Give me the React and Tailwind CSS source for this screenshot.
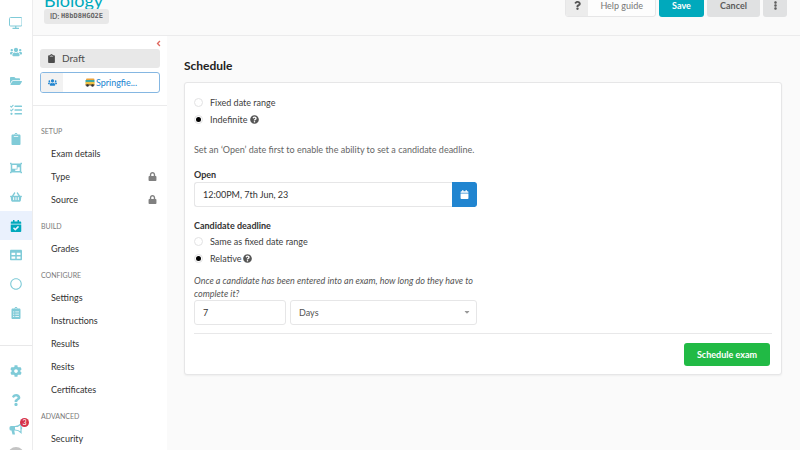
import {
  FaUsers, FaFolderOpen, FaTasks, FaClipboard, FaObjectGroup, FaShoppingBasket,
  FaCalendarCheck, FaTable, FaRegCircle, FaClipboardList, FaCog, FaQuestion,
  FaLock, FaQuestionCircle, FaCalendar, FaEllipsisV, FaAngleLeft, FaCaretDown,
} from "react-icons/fa";

function ScreenIcon({ className }) {
  return (
    <svg viewBox="0 0 27 24" className={className} fill="none" stroke="currentColor" strokeWidth="2">
      <rect x="1" y="1" width="25" height="17" rx="2" />
      <path d="M13.5 18v4M7 22.5h13" strokeWidth="2.5" />
    </svg>
  );
}

function HornIcon({ className }) {
  return (
    <svg viewBox="0 0 28 24" className={className} fill="none" stroke="currentColor" strokeWidth="2.4">
      <path d="M12 7c5 0 9-2 12-5v17c-3-3-7-5-12-5" />
      <path d="M12 6H4a3 3 0 0 0-3 3v3a3 3 0 0 0 3 3h1l2 8h5l-1.5-8H12z" fill="currentColor" stroke="none" />
      <path d="M25 8.5v4" />
    </svg>
  );
}

const railItems = [
  { label: "Dashboard", icon: ScreenIcon },
  { label: "Users", icon: FaUsers },
  { label: "Library", icon: FaFolderOpen },
  { label: "Items", icon: FaTasks },
  { label: "Tests", icon: FaClipboard },
  { label: "Groups", icon: FaObjectGroup },
  { label: "Products", icon: FaShoppingBasket },
  { label: "Exams", icon: FaCalendarCheck, active: true },
  { label: "Tables", icon: FaTable },
  { label: "Status", icon: FaRegCircle },
  { label: "Reports", icon: FaClipboardList },
];

const menu = [
  { title: "Setup", items: [{ name: "Exam details" }, { name: "Type", locked: true }, { name: "Source", locked: true }] },
  { title: "Build", items: [{ name: "Grades" }] },
  {
    title: "Configure",
    items: [{ name: "Settings" }, { name: "Instructions" }, { name: "Results" }, { name: "Resits" }, { name: "Certificates" }],
  },
  { title: "Advanced", items: [{ name: "Security" }] },
];

function RailLink({ label, icon: Icon, active, badge }) {
  return (
    <a
      href="#"
      aria-label={label}
      className={
        active
          ? "relative flex h-[29px] shrink-0 items-center justify-center pr-px bg-[#eaf1fd] text-[#00a9bc]"
          : "relative flex h-[29px] shrink-0 items-center justify-center pr-px text-[#80cbd8]"
      }
    >
      <Icon className="h-3 w-auto" />
      {badge && (
        <span className="absolute top-1 right-[3px] flex size-[9px] items-center justify-center rounded-full bg-[#d6324a] text-[7px] leading-none text-white">
          {badge}
        </span>
      )}
    </a>
  );
}

function Rail() {
  return (
    <nav className="flex w-[33px] shrink-0 flex-col overflow-hidden border-r border-[#ececed] bg-white pt-2">
      {railItems.map((item) => (
        <RailLink key={item.label} {...item} />
      ))}
      <div className="mt-[18px] flex flex-col border-t border-[#e8e8e9] pt-2.5">
        <RailLink label="Preferences" icon={FaCog} />
        <RailLink label="Help" icon={FaQuestion} />
        <RailLink label="News" icon={HornIcon} badge="3" />
        <span className="mt-1 ml-2 size-4 shrink-0 rounded-full bg-[#c4c4c4]" />
      </div>
    </nav>
  );
}

function BusIcon() {
  return (
    <svg viewBox="0 0 20 18" className="h-[9px] w-2.5 shrink-0">
      <rect x="2" y="1" width="17" height="4" rx="2" fill="#e9a23b" />
      <rect x="1" y="4" width="18" height="5" fill="#3fa7a0" />
      <rect x="1" y="8" width="18" height="6" rx="1" fill="#f0c043" />
      <rect x="1" y="13" width="18" height="2" fill="#5b4636" />
      <circle cx="5" cy="15" r="2.5" fill="#333" />
      <circle cx="15" cy="15" r="2.5" fill="#333" />
    </svg>
  );
}

function Header() {
  return (
    <header className="flex h-9 shrink-0 items-end justify-between border-b border-[#ebebec] pr-[13px] pl-[11px]">
      <div className="flex flex-col items-start pb-[11px]">
        <h1 className="text-[18px] leading-[18px] text-[#00a9bc]">Biology</h1>
        <span className="flex h-[15px] items-center rounded-[3px] bg-[#e8e8e8] px-1.5 text-[7px] font-bold text-[#666]">
          ID:&nbsp;<code className="font-['DejaVu_Sans_Mono',monospace] text-[7px]">H8bD8HGO2E</code>
        </span>
      </div>
      <div className="flex gap-[3px] pb-[18px] text-[9px]">
        <button className="flex h-[23px] items-center overflow-hidden rounded-[3px] border border-[#e6e6e7] bg-[#fdfdfd] text-[#767676]">
          <span className="flex h-full w-[22px] items-center justify-center bg-[#ececec] text-[#555]">
            <FaQuestion className="h-[9px] w-auto" />
          </span>
          <span className="px-3">Help guide</span>
        </button>
        <button className="h-[23px] w-[45px] rounded-[3px] bg-[#00a9bc] font-bold text-white">Save</button>
        <button className="h-[23px] w-[53px] rounded-[3px] bg-[#e0e1e2] font-bold text-[#5c5c5c]">Cancel</button>
        <button aria-label="More" className="flex h-[23px] w-6 items-center justify-center rounded-[3px] bg-[#e0e1e2] text-[#5c5c5c]">
          <FaEllipsisV className="h-[9px] w-auto" />
        </button>
      </div>
    </header>
  );
}

function SideMenu() {
  return (
    <aside className="w-[134px] shrink-0 bg-white">
      <div className="border-b border-[#ebebec] px-[7px] pt-[3px] pb-3">
        <button aria-label="Collapse menu" className="ml-auto flex h-[9px] w-1 items-center justify-center text-[#e0695f]">
          <FaAngleLeft className="size-[9px] shrink-0" />
        </button>
        <div className="mt-px flex h-[19px] items-center rounded-[3px] bg-[#e8e8e8] text-[10px] text-[#4c4c4c]">
          <span className="flex w-[22px] justify-center">
            <FaClipboard className="h-[9px] w-auto" />
          </span>
          Draft
        </div>
        <button className="mt-1 flex h-[21px] w-full items-center overflow-hidden rounded-[3px] border border-[#85b7e2] text-[9px] text-[#2185d0]">
          <span className="flex h-full w-[22px] items-center justify-center bg-[#f2f2f2]">
            <FaUsers className="h-[9px] w-auto" />
          </span>
          <span className="flex flex-1 items-center justify-center gap-px">
            <BusIcon /> Springfie...
          </span>
        </button>
      </div>
      <nav className="flex flex-col pt-3.5">
        {menu.map((group) => (
          <section key={group.title} className="mb-1">
            <h2 className="pl-2 text-[7px] leading-[22px] text-[#7a7a7a] uppercase">{group.title}</h2>
            {group.items.map((item) => (
              <a key={item.name} href="#" className="flex h-[23px] items-center justify-between pr-2.5 pl-[18px] text-[9px] text-[#333]">
                {item.name}
                {item.locked && <FaLock className="h-[9px] w-auto text-[#808080]" />}
              </a>
            ))}
          </section>
        ))}
      </nav>
    </aside>
  );
}

function Radio({ name, label, checked, help }) {
  return (
    <label className="flex h-[17px] items-center text-[9px] text-[#404040]">
      <input
        type="radio"
        name={name}
        defaultChecked={checked}
        className="mr-[7px] size-[9px] appearance-none rounded-full border border-[#e2e2e3] bg-white p-px checked:bg-black checked:bg-clip-content"
      />
      {label}
      {help && <FaQuestionCircle className="ml-0.5 size-[9px] text-[#555]" />}
    </label>
  );
}

function ScheduleForm() {
  return (
    <form className="rounded-[3px] border border-[#e6e6e7] bg-white px-[9px] pt-[11px] pb-2 shadow-xs">
      <Radio name="window" label="Fixed date range" />
      <Radio name="window" label="Indefinite" checked help />
      <p className="mt-4 text-[9px] leading-3 text-[#666]">
        Set an ‘Open’ date first to enable the ability to set a candidate deadline.
      </p>
      <div className="w-[283px]">
        <label htmlFor="open" className="mt-[13px] block text-[9px] leading-3 font-bold text-[#333]">Open</label>
        <div className="mt-px flex h-[25px]">
          <input
            id="open"
            defaultValue="12:00PM, 7th Jun, 23"
            className="min-w-0 flex-1 rounded-l-[3px] border border-r-0 border-[#e6e6e7] px-2 text-[9px] text-[#333]"
          />
          <button type="button" aria-label="Pick a date" className="flex w-[25px] items-center justify-center rounded-r-[3px] bg-[#2185d0] text-white">
            <FaCalendar className="h-[9px] w-auto" />
          </button>
        </div>
        <h3 className="mt-[13px] mb-px text-[9px] leading-3 font-bold text-[#333]">Candidate deadline</h3>
        <Radio name="deadline" label="Same as fixed date range" />
        <Radio name="deadline" label="Relative" checked help />
        <p className="mt-[7px] text-[9px] leading-[13px] text-[#555] italic">
          Once a candidate has been entered into an exam, how long do they have to complete it?
        </p>
        <div className="flex h-[25px] gap-1">
          <input
            aria-label="Amount"
            defaultValue="7"
            className="w-[92px] rounded-[3px] border border-[#e6e6e7] px-2 text-[9px] text-[#333]"
          />
          <div className="relative flex flex-1">
            <select aria-label="Unit" className="w-full appearance-none rounded-[3px] border border-[#e6e6e7] px-2 text-[9px] text-[#555]">
              <option>Days</option>
              <option>Hours</option>
            </select>
            <FaCaretDown className="pointer-events-none absolute top-2 right-1.5 size-2 text-[#999]" />
          </div>
        </div>
      </div>
      <div className="mt-2 flex justify-end border-t border-[#e8e8e9] pt-[9px] pr-0.5">
        <button type="button" className="h-[23px] w-[86px] rounded-[3px] bg-[#21ba45] text-[9px] font-bold text-white">
          Schedule exam
        </button>
      </div>
    </form>
  );
}

export default function App() {
  return (
    <div className="flex h-screen overflow-hidden bg-[#fafafa] font-[Lato,sans-serif]">
      <Rail />
      <div className="flex min-w-0 flex-1 flex-col">
        <Header />
        <div className="flex min-h-0 flex-1">
          <SideMenu />
          <main className="min-w-0 flex-1 pt-[22px] pr-[18px] pl-[17px]">
            <h2 className="mb-2 text-[12px] leading-4 font-bold text-[#222]">Schedule</h2>
            <ScheduleForm />
          </main>
        </div>
      </div>
    </div>
  );
}
